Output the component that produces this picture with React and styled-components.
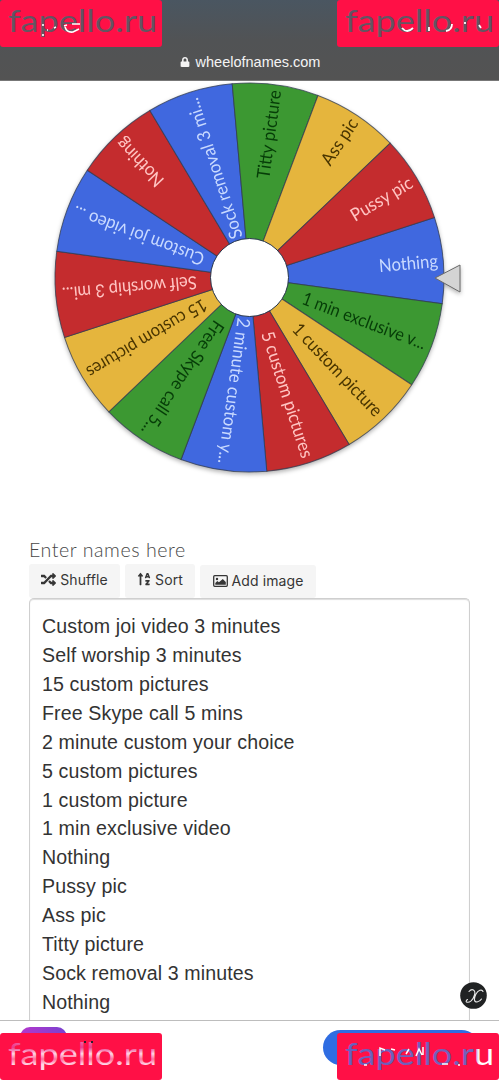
import React from 'react';
import styled, { createGlobalStyle } from 'styled-components';
import { FaLock, FaRandom, FaSortAlphaUp } from 'react-icons/fa';

const GlobalStyle = createGlobalStyle`
  * { box-sizing: border-box; }
  body { margin: 0; background: #fff; }
`;

const Screen = styled.div`
  position: relative;
  width: 499px;
  height: 1080px;
  overflow: hidden;
  display: flex;
  flex-direction: column;
  background: #fff;
  font-family: Inter, "Liberation Sans", sans-serif;
`;

const BrowserBar = styled.header`
  height: 81px;
  flex: none;
  display: flex;
  align-items: flex-end;
  justify-content: center;
  gap: 6px;
  padding: 0 0 9px 1px;
  color: #f4f4f4;
  background: linear-gradient(#4a5661 0, #515355 40px, #535353 79px);
  border-bottom: 1px solid #777;
  svg { margin-bottom: 4px; }
`;

const Address = styled.span`
  font: 14.5px/18px "Liberation Sans", Arial, sans-serif;
`;

const WheelArea = styled.main`
  height: 458px;
  flex: none;
`;

const WheelDrawing = styled.svg`
  display: block;
  filter: drop-shadow(0 2px 2px rgba(0, 0, 0, 0.3));
`;

const SliceLabel = styled.text`
  font: 18px Lato, sans-serif;
  fill: ${({ $color }) => $color};
`;

const Names = styled.section`
  flex: 1;
  min-height: 0;
  padding: 0 29px;
  display: flex;
  flex-direction: column;
`;

const Heading = styled.h1`
  margin: 0;
  height: 25px;
  width: 170px;
  color: #484848;
  font: 300 19.6px/21px Lato, sans-serif;
  letter-spacing: 0.55px;
  white-space: nowrap;
`;

const Toolbar = styled.div`
  height: 34px;
  display: flex;
  gap: ${({ $gap }) => $gap}px;
`;

const ToolButton = styled.button`
  width: ${({ $width }) => $width}px;
  height: ${({ $drop }) => ($drop ? 33 : 34)}px;
  margin: ${({ $drop }) => $drop || 0}px 0 0;
  padding: 0 0 ${({ $drop }) => ($drop ? 2 : 4)}px;
  border: 0;
  border-radius: 3px;
  display: flex;
  align-items: center;
  justify-content: center;
  gap: 4px;
  color: #363636;
  background: #f5f5f5;
  font: 14px Inter, sans-serif;
  letter-spacing: 0.1px;
  white-space: nowrap;
`;

const NameBox = styled.div`
  width: 441px;
  flex: 1;
  padding: 13px 12px 0;
  border: 1px solid #cfcfcf;
  border-bottom: 0;
  border-radius: 5px 5px 0 0;
  box-shadow: inset 0 1px 1px #ddd;
  color: #333;
`;

const Entry = styled.div`
  height: 28.93px;
  font: 19.6px/29px "Liberation Sans", Arial, sans-serif;
  letter-spacing: 0.12px;
  white-space: nowrap;
`;

const AdBar = styled.footer`
  position: relative;
  flex: none;
  height: 60px;
  display: flex;
  justify-content: space-between;
  padding: 6px 20px 0;
  border-top: 1px solid #bdbdbd;
  background: #fff;
`;

const AppIcon = styled.div`
  width: 47px;
  height: 44px;
  border-radius: 10px;
  background: linear-gradient(90deg, #b536cc, #7842d0);
`;

const InstallPill = styled.div`
  width: 156px;
  height: 35px;
  margin: 3px 0 0;
  border-radius: 18px;
  background: #2f6de2;
`;

const CloseBadge = styled.div`
  position: absolute;
  left: 460px;
  top: 982px;
  width: 27px;
  height: 27px;
`;

const Tag = styled.svg`
  position: absolute;
  left: ${({ $x }) => $x}px;
  top: ${({ $y }) => $y}px;
  display: block;
  text { font: 31px Lato, sans-serif; }
`;

const BLUE = '#4068df';
const RED = '#c42c2e';
const YELLOW = '#e5b53d';
const GREEN = '#3c9832';

const slices = [
  ['Nothing', BLUE, 130, 189],
  ['1 min exclusive v...', GREEN, 57, 188],
  ['1 custom picture', YELLOW, 67, 188],
  ['5 custom pictures', RED, 57, 189],
  ['2 minute custom y...', BLUE, 41, 188],
  ['Free Skype call 5...', GREEN, 54, 188],
  ['15 custom pictures', YELLOW, 51, 188],
  ['Self worship 3 mi...', RED, 53, 188],
  ['Custom joi video ...', BLUE, 49, 188],
  ['Nothing', RED, 129, 189],
  ['Sock removal 3 mi...', BLUE, 41, 188],
  ['Titty picture', GREEN, 100, 189],
  ['Ass pic', YELLOW, 137, 189],
  ['Pussy pic', RED, 119, 188],
];

const labelColors = {
  [BLUE]: '#c9daff',
  [RED]: '#ffc5c3',
  [YELLOW]: '#493500',
  [GREEN]: '#063d08',
};

const STEP = 360 / slices.length;
const RADIUS = 194.5;

function Wheel() {
  const rad = (STEP / 2) * Math.PI / 180;
  const x = RADIUS * Math.cos(rad);
  const y = RADIUS * Math.sin(rad);
  return (
    <WheelDrawing width="499" height="410" viewBox="0 0 499 410">
      <g transform="translate(249.5 196.5)">
        {slices.map(([label, color, start, end], i) => (
          <g key={i} transform={`rotate(${-5.1 + i * STEP})`}>
            <path d={`M0 0L${x} ${-y}A${RADIUS} ${RADIUS} 0 0 1 ${x} ${y}Z`} fill={color} stroke="#303b50" strokeOpacity=".75" strokeWidth="1" />
            <SliceLabel x={start} y="6.3" $color={labelColors[color]} textLength={end - start} lengthAdjust="spacingAndGlyphs">{label}</SliceLabel>
          </g>
        ))}
        <circle r="39" fill="#fff" stroke="#26354b" />
      </g>
      <path d="M435 197L460 184V211Z" fill="#d4d4d4" stroke="#696969" strokeWidth="1" />
    </WheelDrawing>
  );
}

function ImageIcon() {
  return (
    <svg width="15" height="12" viewBox="0 0 15 12">
      <rect x=".7" y=".7" width="13.6" height="10.6" rx="1" fill="none" stroke="#363636" strokeWidth="1.3" />
      <circle cx="4" cy="4" r="1.2" fill="#363636" />
      <path d="M2.3 9.8V8l2-2 1.6 1.3L9.8 4l3 3v2.8Z" fill="#363636" />
    </svg>
  );
}

function SiteTag({ x, y, width, height = 47, id, colors, baseline = 32, children }) {
  return (
    <Tag $x={x} $y={y} width={width} height={height} viewBox={`0 0 ${width} ${height}`}>
      <defs>
        <linearGradient id={id} x1="0" y1="0" x2={colors.horizontal ? 1 : 0} y2={colors.horizontal ? 0 : 1}>
          {colors.stops.map(([offset, color], i) => <stop key={i} offset={offset} stopColor={color} />)}
        </linearGradient>
      </defs>
      <rect width={width} height={height} rx="3" fill="#ff1046" />
      <text x="8" y={baseline} textLength="149" lengthAdjust="spacingAndGlyphs" fill={`url(#${id})`}>fapello.ru</text>
      {children}
    </Tag>
  );
}

const entries = [
  'Custom joi video 3 minutes', 'Self worship 3 minutes', '15 custom pictures',
  'Free Skype call 5 mins', '2 minute custom your choice', '5 custom pictures',
  '1 custom picture', '1 min exclusive video', 'Nothing', 'Pussy pic', 'Ass pic',
  'Titty picture', 'Sock removal 3 minutes', 'Nothing',
];

const slate = { stops: [[0, '#605466'], [1, '#675560']] };
const pink = { stops: [[0, '#ff9cc6'], [0.35, '#e93a8c'], [0.52, '#ffd6e5'], [0.66, '#ff6c9c'], [0.8, '#ffd6e5'], [1, '#ffd6e5']] };
const blue = { horizontal: true, stops: [[0, '#6960be'], [0.86, '#7660b9'], [0.9, '#fff'], [1, '#fff']] };

export default function App() {
  return (
    <Screen>
      <GlobalStyle />
      <BrowserBar>
        <FaLock size={10} />
        <Address>wheelofnames.com</Address>
      </BrowserBar>
      <WheelArea><Wheel /></WheelArea>
      <Names>
        <Heading>Enter names here</Heading>
        <Toolbar $gap={5}>
          <ToolButton $width={91}><FaRandom size={15} />Shuffle</ToolButton>
          <ToolButton $width={70}><FaSortAlphaUp size={14} />Sort</ToolButton>
          <ToolButton $width={116} $drop={1}><ImageIcon />Add image</ToolButton>
        </Toolbar>
        <NameBox>{entries.map((entry, i) => <Entry key={i}>{entry}</Entry>)}</NameBox>
      </Names>
      <AdBar><AppIcon /><InstallPill /></AdBar>
      <CloseBadge>
        <svg width="27" height="27" viewBox="0 0 27 27">
          <circle cx="13.5" cy="13.5" r="13.3" fill="#202223" />
          <path d="M9 9.5C12 6 16 8 14.5 13C13 19 9 21 6.5 20Q5.5 19 7.5 17.5M23 9.500C22 7 18 8 16 12C13.500 17 14 20 17 20Q20 19.500 21.500 17" fill="none" stroke="#e8e8e8" strokeWidth="1.1" strokeLinecap="round" />
        </svg>
      </CloseBadge>
      <SiteTag x={0} y={0} width={162} id="top-left" colors={slate}>
        <path d="M43 24v2M43 34v2M47 30l1 0M54 28l2-1M64 26l3-1M72 24h8M65 27q2 6 8 5l6-3" fill="none" stroke="#fff" strokeWidth="1.6" />
      </SiteTag>
      <SiteTag x={337} y={0} width={162} id="top-right" colors={slate}>
        <path d="M65 28q5 6 11 0M92 27v4M109 31q6-1 6-7M128 22v2M142 25l2 3" fill="none" stroke="#fff" strokeWidth="1.8" />
      </SiteTag>
      <SiteTag x={0} y={1033} width={162} id="bottom-left" colors={pink}>
        <path d="M85 8v2M92 8v2" stroke="#28202c" strokeWidth="2" />
      </SiteTag>
      <SiteTag x={337} y={1033} width={162} id="bottom-right" colors={blue}>
        <path d="M43 23v-8l5 2M54 16l4 1M69 21l3-5M79 23l3-7 3 6M86 14v8M27 32h3M105 31h6M121 32h2" fill="none" stroke="#fff" strokeWidth="1.5" />
      </SiteTag>
    </Screen>
  );
}
